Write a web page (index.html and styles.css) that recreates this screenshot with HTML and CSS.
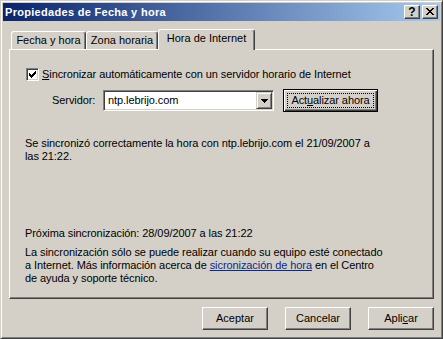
FILE: index.html
```html
<!DOCTYPE html>
<html>
<head>
    <title>Propiedades de Fecha y hora</title>
    <link rel="stylesheet" href="styles.css">
</head>
<body>
    <div class="window">
        <div class="titlebar">
            <span class="title">Propiedades de Fecha y hora</span>
            <div class="caption-buttons">
                <span class="cap-btn help">?</span>
                <span class="cap-btn close">
                    <svg width="8" height="7" viewBox="0 0 8 7"><path d="M0 0h2v1h-2z M6 0h2v1h-2z M1 1h2v1h-2z M5 1h2v1h-2z M2 2h4v1h-4z M3 3h2v1h-2z M2 4h4v1h-4z M1 5h2v1h-2z M5 5h2v1h-2z M0 6h2v1h-2z M6 6h2v1h-2z" fill="#000"/></svg>
                </span>
            </div>
        </div>
        <div class="content">
            <div class="tabs">
                <div class="tab tab-date">Fecha y hora</div>
                <div class="tab tab-zone">Zona horaria</div>
                <div class="tab tab-inet active">Hora de Internet</div>
            </div>
            <div class="panel">
                <div class="check-row">
                    <span class="checkbox">
                        <svg width="7" height="7" viewBox="0 0 7 7"><path d="M0 2h1v1h1v1h1v-1h1v-1h1v-1h1v-1h1v3h-1v1h-1v1h-1v1h-1v1h-1v-1h-1v-1h-1z" fill="#000"/></svg>
                    </span>
                    <span><u>S</u>incronizar automáticamente con un servidor horario de Internet</span>
                </div>
                <div class="server-row">
                    <span class="server-label">Servidor:</span>
                    <div class="combo">
                        <span class="combo-text">ntp.lebrijo.com</span>
                        <span class="combo-btn">
                            <svg width="7" height="4" viewBox="0 0 7 4"><path d="M0 0h7v1h-1v1h-1v1h-1v1h-1v-1h-1v-1h-1v-1h-1z" fill="#000"/></svg>
                        </span>
                    </div>
                    <div class="btn btn-default btn-update"><span class="focus">Act<u>u</u>alizar ahora</span></div>
                </div>
                <p class="status">Se sincronizó correctamente la hora con ntp.lebrijo.com el 21/09/2007 a<br>las 21:22.</p>
                <p class="next">Próxima sincronización: 28/09/2007 a las 21:22</p>
                <p class="note">La sincronización sólo se puede realizar cuando su equipo esté conectado<br>a Internet. Más información acerca de <a class="link" href="#">sicronización de hora</a> en el Centro<br>de ayuda y soporte técnico.</p>
            </div>
            <div class="actions">
                <div class="btn">Aceptar</div>
                <div class="btn">Cancelar</div>
                <div class="btn">Apli<u>c</u>ar</div>
            </div>
        </div>
    </div>
</body>
</html>
```

FILE: styles.css
```css
body {
    margin: 0;
    font-family: "Liberation Sans", Arial, sans-serif;
    font-size: 11px;
    line-height: 13px;
    color: #000;
    background: #d4d0c8;
}
.window {
    width: 443px;
    height: 339px;
    box-sizing: border-box;
    padding: 2px;
    background: #d4d0c8;
    border: 1px solid;
    border-color: #d4d0c8 #404040 #404040 #d4d0c8;
    box-shadow: inset 1px 1px #fff, inset -1px -1px #808080;
}
.titlebar {
    height: 18px;
    display: flex;
    align-items: center;
    justify-content: space-between;
    background: linear-gradient(to right, #0a246a, #a6caf0);
}
.title {
    padding-left: 2px;
    color: #fff;
    font-weight: bold;
    letter-spacing: 0.3px;
}
.caption-buttons {
    display: flex;
    gap: 2px;
    margin-right: 2px;
}
.cap-btn {
    width: 16px;
    height: 14px;
    box-sizing: border-box;
    display: flex;
    align-items: center;
    justify-content: center;
    background: #d4d0c8;
    border: 1px solid;
    border-color: #fff #404040 #404040 #fff;
    box-shadow: inset -1px -1px #808080;
}
.help {
    font-weight: bold;
    font-size: 12px;
    line-height: 12px;
    padding-bottom: 1px;
}
.close svg {
    display: block;
    margin-bottom: 1px;
}
.content {
    padding: 0 6px;
}
.tabs {
    display: flex;
    align-items: flex-end;
    height: 20px;
    margin-top: 8px;
    padding-left: 2px;
}
.tab {
    height: 18px;
    box-sizing: border-box;
    display: flex;
    align-items: center;
    justify-content: center;
    padding-bottom: 1px;
    border: 1px solid;
    border-bottom: none;
    border-color: #fff #404040 #404040 #fff;
    border-radius: 3px 3px 0 0;
    box-shadow: inset -1px 0 #808080;
}
.tab-date {
    width: 75px;
}
.tab-zone {
    width: 72px;
}
.tab-inet {
    width: 97px;
}
.tab.active {
    position: relative;
    z-index: 1;
    height: 21px;
    margin-bottom: -1px;
    padding-bottom: 4px;
    background: #d4d0c8;
}
.panel {
    height: 250px;
    box-sizing: border-box;
    padding: 18px 15px 0;
    letter-spacing: -0.08px;
    border: 1px solid;
    border-color: #fff #404040 #404040 #fff;
    box-shadow: inset -1px -1px #808080;
}
.check-row {
    display: flex;
    align-items: center;
    gap: 3px;
    height: 13px;
    margin-left: 1px;
}
.checkbox {
    width: 13px;
    height: 13px;
    box-sizing: border-box;
    background: #fff;
    border: 1px solid;
    border-color: #808080 #fff #fff #808080;
    box-shadow: inset 1px 1px #404040, inset -1px -1px #d4d0c8;
}
.checkbox svg {
    display: block;
    margin: 2px;
}
.server-row {
    display: flex;
    align-items: center;
    height: 23px;
    margin-top: 8px;
}
.server-label {
    width: 51px;
    margin-left: 27px;
}
.combo {
    width: 171px;
    height: 21px;
    box-sizing: border-box;
    display: flex;
    align-items: center;
    justify-content: space-between;
    padding: 0 1px 0 4px;
    background: #fff;
    border: 1px solid;
    border-color: #808080 #fff #fff #808080;
    box-shadow: inset 1px 1px #404040, inset -1px -1px #d4d0c8;
}
.combo-btn {
    width: 16px;
    height: 17px;
    box-sizing: border-box;
    display: flex;
    align-items: center;
    justify-content: center;
    background: #d4d0c8;
    border: 1px solid;
    border-color: #d4d0c8 #404040 #404040 #d4d0c8;
    box-shadow: inset 1px 1px #fff, inset -1px -1px #808080;
}
.btn {
    width: 66px;
    height: 23px;
    box-sizing: border-box;
    display: flex;
    align-items: center;
    justify-content: center;
    background: #d4d0c8;
    border: 1px solid;
    border-color: #fff #404040 #404040 #fff;
    box-shadow: inset -1px -1px #808080;
}
.btn-default {
    border-color: #000;
    box-shadow: inset 1px 1px #fff, inset -1px -1px #404040, inset -2px -2px #808080;
}
.btn-update {
    width: 95px;
    margin-left: 9px;
}
.focus {
    flex: 1;
    align-self: stretch;
    margin: 3px;
    display: flex;
    align-items: center;
    justify-content: center;
    border: 1px dotted #000;
}
p {
    margin: 0;
}
.status {
    margin-top: 25px;
}
.next {
    margin-top: 64px;
}
.note {
    margin-top: 6px;
}
.link {
    color: #0a2a8c;
}
.actions {
    display: flex;
    justify-content: flex-end;
    gap: 17px;
    margin-top: 8px;
}
```
